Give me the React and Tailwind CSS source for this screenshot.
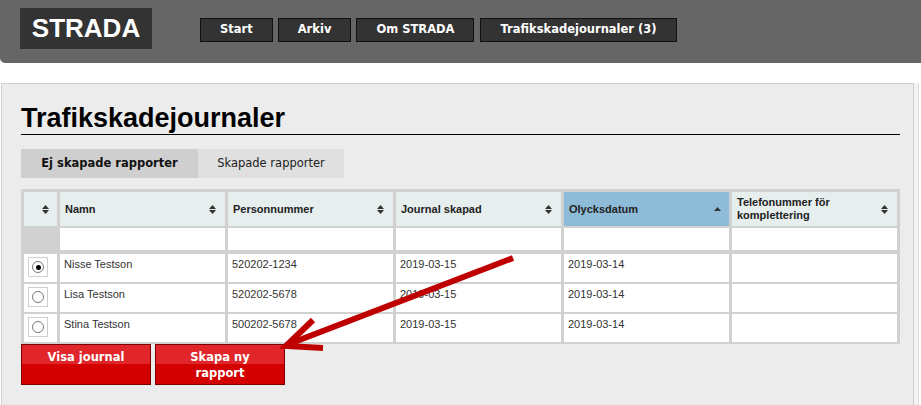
const rows = [
  { name: 'Nisse Testson', pnr: '520202-1234', created: '2019-03-15', date: '2019-03-14', checked: true },
  { name: 'Lisa Testson', pnr: '520202-5678', created: '2019-03-15', date: '2019-03-14' },
  { name: 'Stina Testson', pnr: '500202-5678', created: '2019-03-15', date: '2019-03-14' },
]

function SortBoth() {
  return (
    <svg width="7" height="9" viewBox="0 0 7 9" className="shrink-0">
      <path d="M3.5 0L7 4H0z M0 5h7L3.5 9z" fill="#333" />
    </svg>
  )
}

function SortUp() {
  return (
    <svg width="7" height="4" viewBox="0 0 7 4" className="shrink-0">
      <path d="M3.5 0L7 4H0z" fill="#333" />
    </svg>
  )
}

function NavButton({ children }) {
  return (
    <div className="h-[24px] px-[19px] bg-[#333] border border-[#111] text-white font-bold text-[11.5px]
                    flex items-center font-['DejaVu_Sans',Verdana,sans-serif]">
      {children}
    </div>
  )
}

function HeadCell({ children, active }) {
  return (
    <div className={active
      ? 'h-[34px] bg-[#8ebcd8] flex items-center justify-between pl-[5px] pr-[8px] text-[11px] leading-[13px] font-bold text-[#222]'
      : 'h-[34px] bg-[#e6eeee] flex items-center justify-between pl-[5px] pr-[9px] text-[11px] leading-[13px] font-bold text-[#222]'}>
      <span>{children}</span>
      {active ? <SortUp /> : <SortBoth />}
    </div>
  )
}

function Radio({ checked, first }) {
  return (
    <div className={first ? 'mt-[2px] h-[28px] bg-white pl-[4px] pt-[3px]' : 'h-[28px] bg-white pl-[4px] pt-[3px]'}>
      <div className="w-[20px] h-[20px] border border-[#cfcfcf] flex items-center justify-center">
        <div className="w-[12px] h-[12px] rounded-full border border-[#777] bg-white flex items-center justify-center">
          {checked && <div className="w-[5px] h-[5px] rounded-full bg-black" />}
        </div>
      </div>
    </div>
  )
}

function Cell({ children, first }) {
  return (
    <div className={first
      ? 'mt-[2px] h-[28px] bg-white px-[4px] pt-[4px] text-[11px] leading-[13px] text-[#333]'
      : 'h-[28px] bg-white px-[4px] pt-[4px] text-[11px] leading-[13px] text-[#333]'}>
      {children}
    </div>
  )
}

function RedButton({ children }) {
  return (
    <button className="w-[130px] h-[41px] border border-[#7d0000] text-white font-bold text-[11.5px] leading-[16px]
                       pt-[4px] flex flex-col items-center justify-start
                       bg-[linear-gradient(#e0262b_0%,#e0262b_50%,#d30000_50%,#d30000_100%)]
                       font-['DejaVu_Sans',Verdana,sans-serif]">
      {children}
    </button>
  )
}

export default function App() {
  return (
    <div className="relative w-[921px] h-[405px] bg-white overflow-hidden font-['Liberation_Sans',Arial,sans-serif]">

      {/* Top bar */}
      <header className="h-[63px] bg-[#666] rounded-bl-[5px] flex items-start pl-[20px] pt-[8px]">
        <div className="w-[132px] h-[41px] bg-[#333] text-white font-bold text-[26px] flex items-center justify-center">
          STRADA
        </div>
        <nav className="flex ml-[48px] mt-[10px]">
          <NavButton>Start</NavButton>
          <div className="ml-[5px]"><NavButton>Arkiv</NavButton></div>
          <div className="ml-[5px]"><NavButton>Om STRADA</NavButton></div>
          <div className="ml-[6px]"><NavButton>Trafikskadejournaler (3)</NavButton></div>
        </nav>
      </header>

      {/* Main panel */}
      <main className="mt-[20px] ml-[1px] w-[913px] h-[340px] bg-[#ececec] border border-[#cfcfcf]
                       shadow-[4px_0_0_#f3f3f3,5px_0_0_#dcdcdc] pl-[19px] pt-[19px]">

        <h1 className="w-[879px] text-[27px] leading-[30px] font-bold text-black pb-[1px] border-b border-black">
          Trafikskadejournaler
        </h1>

        {/* Tabs */}
        <div className="flex mt-[14px] h-[29px] text-[11.5px] font-['DejaVu_Sans',Verdana,sans-serif]">
          <div className="w-[177px] bg-[#cfcfcf] font-bold text-[#111] flex items-center justify-center">
            Ej skapade rapporter
          </div>
          <div className="w-[146px] bg-[#e0e0e0] text-[#222] flex items-center justify-center">
            Skapade rapporter
          </div>
        </div>

        {/* Table */}
        <div className="mt-[11px] w-max grid grid-cols-[33px_165px_165px_165px_165px_165px] gap-x-[3px] gap-y-[2px]
                        px-[3px] pt-[3px] pb-[2px] bg-[#d1d1d1]">
          <div className="h-[34px] bg-[#e6eeee] flex items-center justify-end pr-[8px]">
            <SortBoth />
          </div>
          <HeadCell>Namn</HeadCell>
          <HeadCell>Personnummer</HeadCell>
          <HeadCell>Journal skapad</HeadCell>
          <HeadCell active>Olycksdatum</HeadCell>
          <HeadCell>
            Telefonummer för<br />komplettering
          </HeadCell>

          <div className="h-[22px]" />
          <div className="h-[22px] bg-white" />
          <div className="h-[22px] bg-white" />
          <div className="h-[22px] bg-white" />
          <div className="h-[22px] bg-white" />
          <div className="h-[22px] bg-white" />

          {rows.map((r, i) => (
            <div key={r.pnr + r.name} className="contents">
              <Radio checked={r.checked} first={i === 0} />
              <Cell first={i === 0}>{r.name}</Cell>
              <Cell first={i === 0}>{r.pnr}</Cell>
              <Cell first={i === 0}>{r.created}</Cell>
              <Cell first={i === 0}>{r.date}</Cell>
              <Cell first={i === 0} />
            </div>
          ))}
        </div>

        {/* Actions */}
        <div className="flex gap-[4px]">
          <RedButton>Visa journal</RedButton>
          <RedButton>
            <span>Skapa ny</span>
            <span>rapport</span>
          </RedButton>
        </div>
      </main>

      {/* Annotation arrow */}
      <svg className="absolute inset-0 pointer-events-none" width="921" height="405" viewBox="0 0 921 405">
        <line x1="513" y1="258" x2="289" y2="344" stroke="#bf0000" strokeWidth="6" />
        <polyline points="313,320 286,346 323,348" fill="none" stroke="#bf0000" strokeWidth="6"
                  strokeLinejoin="miter" />
      </svg>
    </div>
  )
}
